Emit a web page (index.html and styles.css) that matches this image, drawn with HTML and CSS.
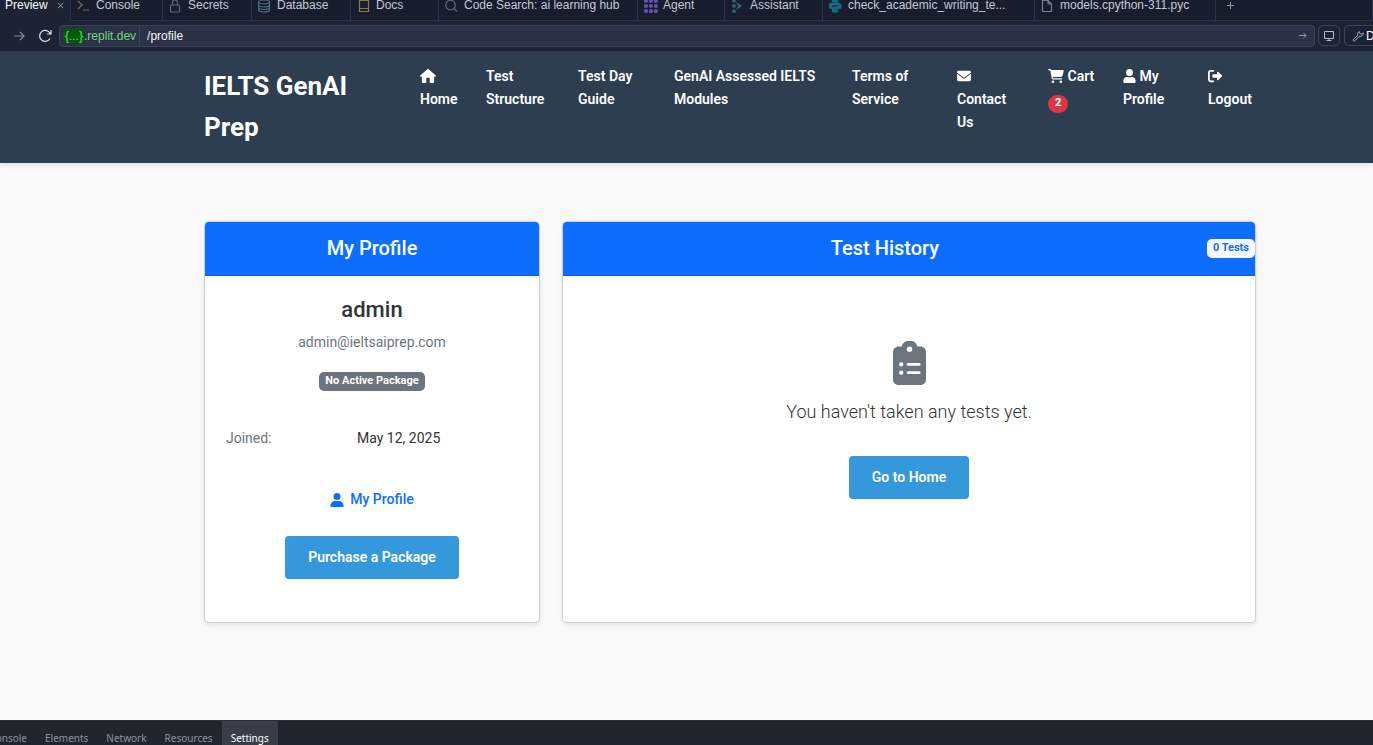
FILE: index.html
```html
<!DOCTYPE html>
<html lang="en">
<head>
<meta charset="utf-8">
<title>My Profile - IELTS GenAI Prep</title>
<link rel="stylesheet" href="styles.css">
</head>
<body>
<div class="tabs" role="tablist">
  <button class="tab tab-preview active" role="tab">Preview
    <svg class="close" viewBox="0 0 8 8" width="7" height="7"><path d="M1 1l6 6M7 1L1 7" stroke="#a3a9b8" fill="none"/></svg>
  </button>
  <button class="tab tab-console" role="tab">
    <svg viewBox="0 0 14 14" width="14" height="14" fill="none" stroke="#776d4d" stroke-width="1.2"><path d="M1 2l4 4-4 4M6 11h6"/></svg>Console</button>
  <button class="tab tab-secrets" role="tab">
    <svg viewBox="0 0 14 14" width="14" height="14" fill="none" stroke="#5f6675" stroke-width="1.2"><rect x="1.500" y="6" width="9" height="7" rx="1"/><path d="M3.500 6V3.500a2.500 2.500 0 0 1 5 0V6"/></svg>Secrets</button>
  <button class="tab tab-database" role="tab">
    <svg viewBox="0 0 14 14" width="14" height="14" fill="none" stroke="#536b83" stroke-width="1.200"><ellipse cx="6" cy="3" rx="5.500" ry="2"/><path d="M.5 3v8c0 1.200 2.500 2 5.500 2s5.500-.8 5.500-2V3M.5 6c0 1.200 2.500 2 5.500 2s5.500-.8 5.500-2M.5 8.500c0 1.200 2.500 2 5.500 2s5.500-.8 5.500-2"/></svg>Database</button>
  <button class="tab tab-docs" role="tab">
    <svg viewBox="0 0 14 14" width="14" height="14" fill="none" stroke="#85794f" stroke-width="1.200"><path d="M2.500 1.500h9v11h-9zM2.500 9.500h9"/></svg>Docs</button>
  <button class="tab tab-search" role="tab">
    <svg viewBox="0 0 14 14" width="14" height="14" fill="none" stroke="#626978" stroke-width="1.200"><circle cx="5.500" cy="6" r="4.800"/><path d="M9 9.500l3 3"/></svg>Code Search: ai learning hub</button>
  <button class="tab tab-agent" role="tab">
    <svg viewBox="0 0 14 14" width="14" height="14" fill="none" stroke="#6650a8" stroke-width="4.200" stroke-linecap="round" stroke-dasharray="0 4.900"><path d="M2 2h11M2 7h11M2 12h11"/></svg>Agent</button>
  <button class="tab tab-assistant" role="tab">
    <svg viewBox="0 0 14 14" width="14" height="14" fill="#34606f"><circle cx="3" cy="1.800" r="1.900"/><circle cx="3" cy="7" r="1.900"/><circle cx="3" cy="12.200" r="1.900"/><path d="M5 3l5 3q1 1 0 2l-5 3 2-4z"/></svg>Assistant</button>
  <button class="tab tab-python" role="tab">
    <svg viewBox="0 0 14 14" width="14" height="14" fill="#126d80"><path d="M3 1q3-1.500 6 0v4q0 1.500-1.500 1.500h-3Q3 6.500 3 8v2H2q-2.500 0-2.500-3.200T2 3.800h4v-.6H3z"/><path d="M9 13q-3 1.500-6 0V9q0-1.500 1.500-1.500h3Q9 7.500 9 6V4h1q2.500 0 2.500 3.200T10 10.200H6v.6h3z"/></svg>check_academic_writing_te...</button>
  <button class="tab tab-models" role="tab">
    <svg viewBox="0 0 14 14" width="14" height="14" fill="none" stroke="#777d8b" stroke-width="1.200"><path d="M1.500 1.500h5.500l3.500 3.500v7.500h-9zM7 1.500V5h3.500"/></svg>models.cpython-311.pyc</button>
  <button class="tab tab-add" aria-label="New tab">
    <svg viewBox="0 0 9 9" width="9" height="9"><path d="M4.500 1v7M1 4.500h7" stroke="#8c929f" fill="none"/></svg></button>
</div>
<form class="toolbar">
  <button class="tool" type="button" aria-label="Forward"><svg viewBox="0 0 14 14" width="14" height="14" fill="none" stroke="#858b99" stroke-width="1.200"><path d="M2 7h10M8 3l4 4-4 4"/></svg></button>
  <button class="tool" type="button" aria-label="Reload"><svg viewBox="0 0 14 14" width="14" height="14" fill="none" stroke="#e2e4e9" stroke-width="1.200"><path d="M12 9.500A5.500 5.500 0 1 1 11.500 3.500L13 5M13 1v4H9"/></svg></button>
  <div class="address">
    <label class="host" for="path"><span class="brace">{...}</span>.replit.dev</label>
    <input id="path" class="path" type="text" value="/profile">
    <button class="go" type="button" aria-label="Go"><svg viewBox="0 0 10 10" width="9" height="9" fill="none" stroke="#a0a5b2"><path d="M1 5h8M6 2l3 3-3 3"/></svg></button>
  </div>
  <button class="box" type="button" aria-label="Screen size"><svg viewBox="0 0 12 12" width="12" height="12" fill="none" stroke="#b8bcc6"><path d="M1.500 1.500h9v7h-9zM6 8.500v2M3.500 10.500h5"/></svg></button>
  <button class="box devtools" type="button"><svg viewBox="0 0 12 12" width="12" height="12" fill="none" stroke="#a5aab6"><path d="M7.200 1.500a3 3 0 0 0-1.300 3.800L1.400 9.300a1 1 0 0 0 1.500 1.500l4.200-4.500a3 3 0 0 0 4-3.500L9.200 4.500 7.500 3z"/></svg>Devtools</button>
</form>

<div class="page">
  <header class="site-header">
    <a class="brand" href="#">IELTS GenAI Prep</a>
    <nav class="nav">
      <a href="#"><svg class="icon lead" viewBox="0 0 576 512" width="16" height="14" fill="currentColor"><path d="M575.800 255.500c0 18-15 32.100-32 32.100h-32l.7 160.200c0 40-18 64.200-48 64.200H352V352c0-18-14-32-32-32h-64c-18 0-32 14-32 32v160H112c-30 0-48-24-48-64V287.600H32c-18 0-32-14-32-32.100 0-9 3-17 10-24L266.400 8c7-7 15-8 22-8s15 2 21 7l255.400 224.500c8 7 12 15 11 24z"/></svg>Home</a>
      <a href="#">Test Structure</a>
      <a href="#">Test Day Guide</a>
      <a href="#">GenAI Assessed IELTS Modules</a>
      <a href="#">Terms of Service</a>
      <a href="#"><svg class="icon lead" viewBox="0 0 512 512" width="14" height="14" fill="currentColor"><path d="M48 64a48 48 0 0 0-29 86l218 164c11 8 27 8 38 0l218-164a48 48 0 0 0-29-86zM0 176v208a64 64 0 0 0 64 64h384a64 64 0 0 0 64-64V176L294 339c-23 17-53 17-76 0z"/></svg>Contact Us</a>
      <a href="#"><svg class="icon" viewBox="0 0 576 512" width="16" height="14" fill="currentColor"><path d="M0 24C0 11 11 0 24 0h46c22 0 41 13 50 32h411c26 0 45 25 38 50l-41 152c-9 32-38 54-71 54H171l5 28c2 12 12 20 24 20h288a24 24 0 0 1 0 48H200c-35 0-64-25-71-59L77 55c-1-4-4-7-7-7H24C11 48 0 37 0 24zm128 440a48 48 0 1 1 96 0 48 48 0 1 1-96 0zm288 0a48 48 0 1 1 96 0 48 48 0 1 1-96 0z"/></svg> Cart <span class="count">2</span></a>
      <a href="#"><svg class="icon" viewBox="0 0 448 512" width="13" height="14" fill="currentColor"><path d="M224 256a128 128 0 1 0 0-256 128 128 0 0 0 0 256zm90 32h-17c-46 21-100 21-146 0h-17C60 288 0 348 0 422v42c0 27 21 48 48 48h352c27 0 48-21 48-48v-42c0-74-60-134-134-134z"/></svg> My Profile</a>
      <a href="#"><svg class="icon lead" viewBox="0 0 512 512" width="14" height="14" fill="currentColor"><path d="M192 32a32 32 0 0 1 0 64H96c-18 0-32 14-32 32v256c0 18 14 32 32 32h96a32 32 0 0 1 0 64H96c-53 0-96-43-96-96V128c0-53 43-96 96-96zM505 233c10 10 10 30 0 41L377 402c-18 17-47 5-47-19v-63H192c-18 0-32-14-32-32v-64c0-18 14-32 32-32h138v-63c0-25 29-37 47-20z"/></svg>Logout</a>
    </nav>
  </header>

  <main class="content">
    <section class="card">
      <div class="card-header"><h2>My Profile</h2></div>
      <div class="profile">
        <h3>admin</h3>
        <p class="email">admin@ieltsaiprep.com</p>
        <span class="badge">No Active Package</span>
        <dl class="facts"><dt>Joined:</dt><dd>May 12, 2025</dd></dl>
        <a class="profile-link" href="#"><svg viewBox="0 0 14 14" width="14" height="14" fill="currentColor"><circle cx="7" cy="3.500" r="3.500"/><path d="M1 14Q0 14 .5 12 1.500 8 5 8h4q3.500 0 4.500 4 .5 2-.5 2z"/></svg>My Profile</a>
        <a class="btn" href="#">Purchase a Package</a>
      </div>
    </section>
    <section class="card">
      <div class="card-header"><h2>Test History</h2><span class="badge light">0 Tests</span></div>
      <div class="history">
        <svg viewBox="0 0 384 512" width="33" height="44"><path fill="#6c757d" d="M64 64h36a96 96 0 0 1 184 0h36c35 0 64 29 64 64v320c0 35-29 64-64 64H64c-35 0-64-29-64-64V128c0-35 29-64 64-64z"/><g fill="#fff"><circle cx="192" cy="96" r="32"/><circle cx="96" cy="272" r="25"/><circle cx="96" cy="368" r="25"/><rect x="160" y="256" width="160" height="32" rx="16"/><rect x="160" y="352" width="160" height="32" rx="16"/></g></svg>
        <p>You haven't taken any tests yet.</p>
        <a class="btn" href="#">Go to Home</a>
      </div>
    </section>
  </main>
</div>

<div class="console" role="tablist">
  <button role="tab" class="cut">Console</button>
  <button role="tab">Elements</button>
  <button role="tab">Network</button>
  <button role="tab">Resources</button>
  <button role="tab" class="active">Settings</button>
</div>
</body>
</html>
```
FILE: styles.css
```css
* { box-sizing: border-box; }
body {
  margin: 0;
  height: 100vh;
  display: flex;
  flex-direction: column;
  overflow: hidden;
  background: #f9f9f9;
  font-family: Roboto, "Liberation Sans", sans-serif;
  font-size: 14px;
  line-height: 23px;
  color: #333;
}
button, input { font: inherit; color: inherit; margin: 0; padding: 0; border: 0; background: none; }
a { color: inherit; text-decoration: none; }
h2, h3, p, dl, dd { margin: 0; }
svg { flex: none; }

/* Workspace tabs */
.tabs {
  display: flex;
  flex: none;
  height: 21px;
  background: #171d2d;
  color: #c5c9d3;
  font: 12px/13px "Liberation Sans", sans-serif;
}
.tab {
  display: flex;
  flex: none;
  align-items: center;
  gap: 5px;
  padding: 0 0 9px 6px;
  font: inherit;
  white-space: nowrap;
  border-right: 1px solid #2b3245;
  border-bottom: 1px solid #2b3245;
}
.tab.active { background: #1c2333; border-bottom-color: #1c2333; color: #f5f9fc; padding-left: 5px; gap: 9px; }
.tab-preview { width: 71px; }
.tab-console { width: 92px; }
.tab-secrets { width: 89px; }
.tab-database { width: 99px; }
.tab-docs { width: 88px; }
.tab-search { width: 199px; }
.tab-agent { width: 87px; }
.tab-assistant { width: 98px; }
.tab-python { width: 212px; }
.tab-models { width: 181px; }
.tab-add { flex: 1; padding-left: 10px; }

/* Address bar */
.toolbar {
  display: flex;
  flex: none;
  align-items: center;
  height: 30px;
  padding: 0 0 1px 6px;
  background: #1c2333;
  color: #f5f9fc;
  font: 12px/14px "Liberation Sans", sans-serif;
}
.tool { display: flex; justify-content: center; width: 26px; }
.address {
  flex: 1;
  display: flex;
  align-items: center;
  height: 22px;
  margin-right: 3px;
  margin-left: 1px;
  border: 1px solid #3c445c;
  border-radius: 4px;
  background: #2b3245;
}
.host { display: flex; align-items: center; height: 20px; padding: 0 3px 0 4px; color: #6cd97e; border-right: 1px solid #3c445c; }
.brace { padding: 0 1px; border-radius: 3px; background: #005c08; }
.path { flex: 1; min-width: 0; height: 20px; padding-left: 7px; outline: 0; }
.go { display: flex; padding-right: 7px; }
.box {
  display: flex;
  flex: none;
  align-items: center;
  justify-content: center;
  width: 22px;
  height: 21px;
  border: 1px solid #3c445c;
  border-radius: 5px;
}
.devtools { justify-content: flex-start; gap: 2px; width: 29px; margin-left: 4px; padding-left: 7px; overflow: hidden; border-right: 0; border-radius: 5px 0 0 5px; }

/* Site */
.page { flex: 1; min-height: 0; overflow: hidden; }
.site-header {
  display: flex;
  align-items: flex-start;
  padding: 14px 117px 15px 204px;
  background: #2c3e50;
  color: #fff;
  box-shadow: 0 2px 5px rgba(0, 0, 0, .1);
}
.brand { width: 216px; flex: none; padding: 1px 60px 0 0; font-size: 26px; line-height: 41px; font-weight: 700; }
.nav {
  flex: 1;
  display: grid;
  grid-template-columns: 66fr 92fr 96fr 178fr 105fr 91fr 75fr 85fr 48fr;
  font-weight: 600;
}
.nav a { min-width: 0; padding-right: 24px; }
.nav a:last-child { padding-right: 0; }
.icon { vertical-align: -2px; }
.icon.lead { display: block; margin: 4px 0 5px; }
.count {
  display: inline-block;
  padding: 2px 7px 5px;
  border-radius: 10px;
  background: #dc3545;
  font-size: 11px;
  line-height: 11px;
  font-weight: 700;
  vertical-align: -2px;
}

.content {
  display: grid;
  grid-template-columns: 336fr 694fr;
  gap: 22px;
  padding: 58px 117px 58px 204px;
}
.card {
  overflow: hidden;
  border: 1px solid #cfcfcf;
  border-radius: 5px;
  background: #fff;
  box-shadow: 0 2px 4px rgba(0, 0, 0, .09);
}
.card-header {
  display: flex;
  align-items: center;
  padding: 14px 0;
  border-bottom: 1px solid #0b5cd6;
  background: #0d6efd;
  color: #fff;
  text-align: center;
}
.card-header h2 { flex: 1; font-size: 20px; line-height: 25px; font-weight: 500; }
.badge {
  padding: 3px 6px 5px;
  border-radius: 5px;
  background: #6c757d;
  color: #fff;
  font-size: 11px;
  line-height: 11px;
  font-weight: 700;
}
.badge.light { background: #f8f9fa; color: #0d6efd; }
.profile { display: flex; flex-direction: column; align-items: center; padding: 21px 21px 43px; }
.profile h3 { font-size: 22px; line-height: 26px; font-weight: 500; }
.email { margin: 8px 0 18px; color: #6c757d; }
.facts { display: flex; width: 100%; margin: 36px 0 38px; }
.facts dt { width: 131px; color: #6c757d; }
.profile-link { display: flex; align-items: center; gap: 6px; margin-bottom: 25px; color: #0d6efd; font-weight: 500; }
.btn {
  padding: 10px 23px;
  border-radius: 4px;
  background: #3498db;
  color: #fff;
  font-weight: 600;
}
.history { display: flex; flex-direction: column; align-items: center; padding: 65px 20px; }
.history p { margin: 13px 0 31px; font-size: 18px; line-height: 27px; font-weight: 300; }

/* Console strip */
.console {
  display: flex;
  flex: none;
  height: 25px;
  overflow: hidden;
  background: #21252d;
  color: #8c93a1;
  font: 10px/15px "Noto Sans", sans-serif;
  border-top: 1px solid #2b3237;
}
.console button { flex: none; padding: 10px 9px 0; }
.console .cut { width: 36px; padding-left: 0; direction: rtl; overflow: hidden; }
.console .active { background: #393d47; color: #fff; }
```
